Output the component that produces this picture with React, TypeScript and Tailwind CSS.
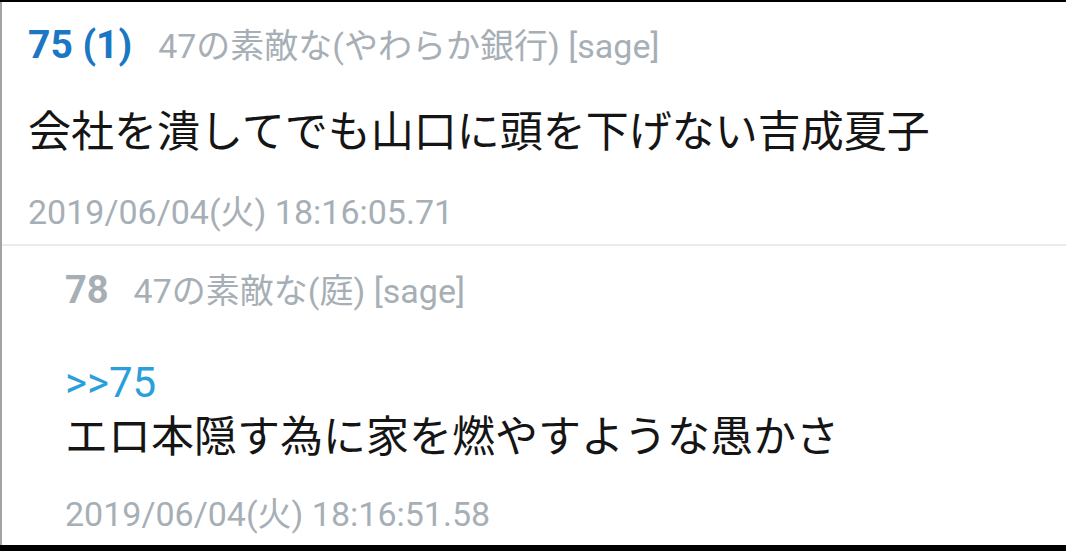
const FONT = "font-['Roboto','Noto_Sans_CJK_JP',sans-serif]";

export default function App() {
  return (
    <div className={`w-[1066px] h-[551px] bg-black flex flex-col ${FONT}`}>
      <div className="mt-[2px] h-[543px] bg-white border-l-2 border-[#a3a3a3] flex flex-col overflow-hidden">
        {/* post 75 */}
        <div className="pl-[26px]">
          <div className="mt-[18px] h-[50px] leading-[50px] flex items-baseline gap-[26px] whitespace-nowrap">
            <span className="text-[39px] font-bold text-[#1b76c4]">75 (1)</span>
            <span className="text-[34px] text-[#a7afb6]">47の素敵な(やわらか銀行) [sage]</span>
          </div>
          <div className="mt-[37px] h-[50px] leading-[50px] text-[43px] text-[#151515] whitespace-nowrap">
            会社を潰してでも山口に頭を下げない吉成夏子
          </div>
          <div className="mt-[35px] h-[40px] leading-[40px] text-[34px] text-[#a7afb6] whitespace-nowrap">
            2019/06/04(火) 18:16:05.71
          </div>
        </div>
        <div className="mt-[12px] h-[2px] bg-[#ebebeb]" />

        {/* post 78 */}
        <div className="pl-[63px]">
          <div className="mt-[24px] h-[40px] leading-[40px] flex items-baseline gap-[25px] whitespace-nowrap">
            <span className="text-[38px] font-bold text-[#a7afb6]">78</span>
            <span className="text-[34px] text-[#a7afb6]">47の素敵な(庭) [sage]</span>
          </div>
          <div className="mt-[45px] h-[55px] leading-[55px] text-[42px] text-[#2a9fdb] whitespace-nowrap">
            &gt;&gt;75
          </div>
          <div className="h-[55px] leading-[55px] text-[43px] text-[#151515] whitespace-nowrap">
            エロ本隠す為に家を燃やすような愚かさ
          </div>
          <div className="mt-[29px] h-[40px] leading-[40px] text-[34px] text-[#a7afb6] whitespace-nowrap">
            2019/06/04(火) 18:16:51.58
          </div>
        </div>
      </div>
    </div>
  );
}
